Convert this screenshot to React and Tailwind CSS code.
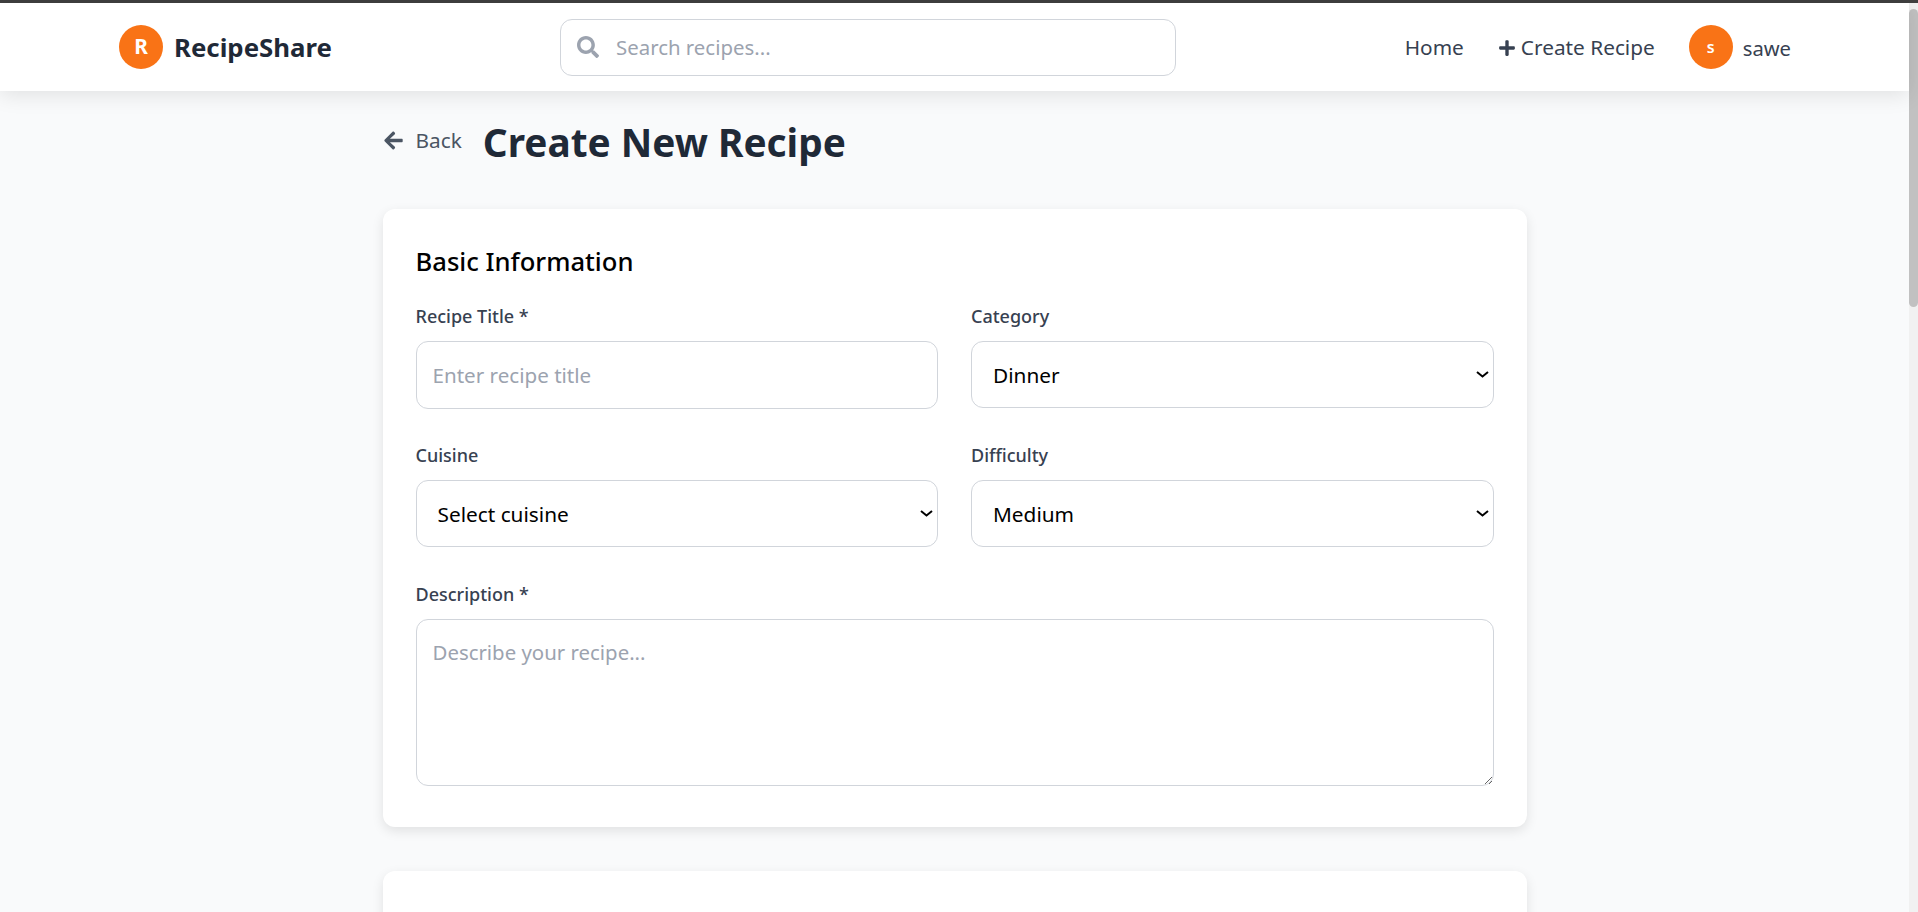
import React from 'react';
import { FaSearch, FaPlus, FaArrowLeft } from 'react-icons/fa';

const fieldClass = 'w-full rounded-[12px] border border-[#d1d5db] bg-white text-black outline-none placeholder:text-[#9ca3af]';
const labelClass = 'mb-[11px] block text-[18px] leading-[27px] font-medium text-[#374151]';

function Field({ label, children }) {
    return (
        <div>
            <label className={labelClass}>{label}</label>
            {children}
        </div>
    );
}

function Picker({ value, options }) {
    return (
        <div className="relative">
            <select defaultValue={value} className={`${fieldClass} h-[67px] appearance-none pt-[2px] pr-[17px] pl-[21px] text-[20.8px]`}>
                {options.map((o) => <option key={o}>{o}</option>)}
            </select>
            <svg viewBox="0 0 13 7" className="pointer-events-none absolute top-[30px] right-[5px] h-[7px] w-[13px]" fill="none" stroke="#000" strokeWidth="2">
                <path d="M1 1l5.500 4.500L12 1" />
            </svg>
        </div>
    );
}

export default function App() {
    return (
        <div className="flex h-[912px] flex-col overflow-hidden bg-[#f9fafb] font-['Noto_Sans','Open_Sans',sans-serif]">
            {/* Window edge */}
            <div className="h-[3px] shrink-0 bg-[#3f3f3f]" />

            <div className="flex min-h-0 flex-1">
                <div className="relative min-w-0 flex-1">
                    {/* Header */}
                    <header className="relative z-10 flex h-[88px] items-center bg-white pr-[118px] pl-[119px] shadow-[0_4px_20px_rgba(0,0,0,0.1)]">
                        <div className="flex w-[441px] items-center gap-[11px]">
                            <div className="flex h-[44px] w-[44px] items-center justify-center rounded-full bg-[#f97316] text-[20.8px] font-bold text-white">R</div>
                            <span className="text-[25.8px] font-bold text-[#1f2937]">RecipeShare</span>
                        </div>

                        <div className="relative w-[616px]">
                            <FaSearch className="absolute top-[17px] left-[17px] h-[22px] w-[22px] text-[#9ca3af]" />
                            <input
                                placeholder="Search recipes..."
                                className="h-[57px] w-full rounded-[12px] border border-[#d1d5db] bg-white pr-4 pl-[55px] text-[20.4px] outline-none placeholder:text-[#9ca3af]"
                            />
                        </div>

                        <nav className="ml-auto flex items-center text-[20.8px] text-[#374151]">
                            <span className="mt-[2px]">Home</span>
                            <span className="mt-[2px] ml-[34px] flex items-center gap-[5px]">
                                <FaPlus className="h-[18px] w-[18px]" />
                                Create Recipe
                            </span>
                            <div className="ml-[34px] flex h-[44px] w-[44px] items-center justify-center rounded-full bg-[#f97316] text-[16px] font-semibold text-white">s</div>
                            <span className="mt-[2px] ml-[10px] text-[20.2px]">sawe</span>
                        </nav>
                    </header>

                    {/* Page */}
                    <main className="mx-auto w-[1144px]">
                        <div className="flex h-[118px] items-center pb-[15px]">
                            <span className="mb-[4px] flex items-center gap-[12px] text-[20.8px] text-[#4b5563]">
                                <FaArrowLeft className="h-[21px] w-[21px]" />
                                Back
                            </span>
                            <h1 className="ml-[21px] text-[38.8px] font-bold text-[#1f2937]">Create New Recipe</h1>
                        </div>

                        <section className="rounded-[12px] bg-white px-[33px] pt-[33px] pb-[41px] shadow-[0_4px_12px_rgba(0,0,0,0.1)]">
                            <h2 className="mb-[21px] text-[25.6px] leading-[40px] font-medium text-black">Basic Information</h2>

                            <div className="grid grid-cols-2 gap-x-[33px] gap-y-[33px]">
                                <Field label="Recipe Title *">
                                    <input placeholder="Enter recipe title" className={`${fieldClass} h-[68px] px-[16px] text-[20.6px]`} />
                                </Field>
                                <Field label="Category">
                                    <Picker value="Dinner" options={['Breakfast', 'Lunch', 'Dinner', 'Dessert']} />
                                </Field>
                                <Field label="Cuisine">
                                    <Picker value="Select cuisine" options={['Select cuisine', 'Italian', 'Mexican', 'Indian']} />
                                </Field>
                                <Field label="Difficulty">
                                    <Picker value="Medium" options={['Easy', 'Medium', 'Hard']} />
                                </Field>
                            </div>

                            <div className="mt-[34px]">
                                <Field label="Description *">
                                    <textarea placeholder="Describe your recipe..." className={`${fieldClass} block h-[167px] px-[16px] py-[17px] text-[20.4px]`} />
                                </Field>
                            </div>
                        </section>

                        <section className="mt-[44px] h-[300px] rounded-[12px] bg-white shadow-[0_4px_12px_rgba(0,0,0,0.1)]" />
                    </main>
                </div>

                {/* Scrollbar */}
                <div className="w-[9px] shrink-0 bg-[#f1f1f1] pt-[6px]">
                    <div className="h-[298px] rounded-full bg-[#c1c1c1]" />
                </div>
            </div>
        </div>
    );
}
